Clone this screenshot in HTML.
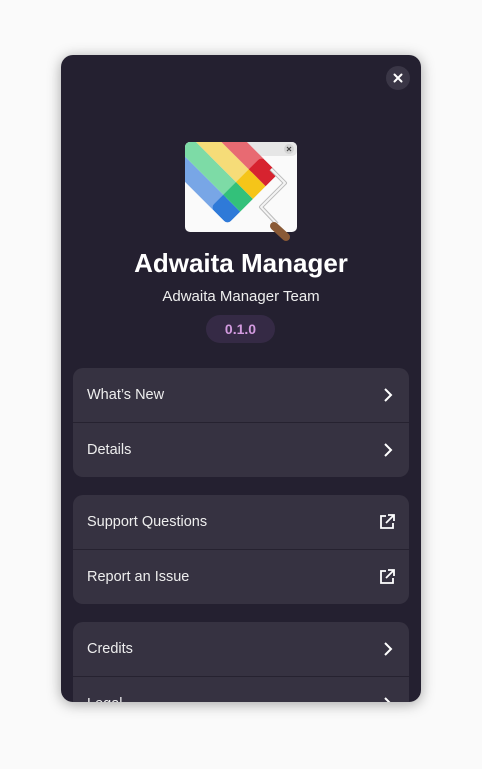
<!DOCTYPE html>
<html><head><style>
body{margin:0;width:482px;height:769px;background:#fafafa;font-family:"Liberation Sans",sans-serif;position:relative;overflow:hidden}
.win{position:absolute;left:61px;top:55px;width:360px;height:647px;background:#242030;border-radius:12px;overflow:hidden;box-shadow:0 2px 14px rgba(0,0,0,.35)}
.close{position:absolute;left:325px;top:11px;width:24px;height:24px;border-radius:12px;background:#3a3646}
.title{position:absolute;left:0;width:360px;top:193px;text-align:center;color:#fff;font-weight:bold;font-size:26px}
.team{position:absolute;left:0;width:360px;top:233px;text-align:center;color:#eee;font-size:15px}
.ver{position:absolute;left:145px;top:260px;width:69px;height:28px;border-radius:14px;background:#352a45;color:#d39be0;font-weight:bold;font-size:14px;text-align:center;line-height:28px}
.card{position:absolute;left:12px;width:336px;background:#363241;border-radius:10px;overflow:hidden}
.row{height:54px;line-height:54px;padding-left:14px;color:#eee;font-size:14.5px;position:relative;border-top:1px solid #262230}
.row:first-child{border-top:none}
.row svg{position:absolute;right:16px;top:19px}
</style></head><body>
<div class="win">
<div class="close"><svg width="24" height="24"><path d="M8.5 8.5L15.5 15.5M15.5 8.5L8.5 15.5" stroke="#fff" stroke-width="2" stroke-linecap="round"/></svg></div>
<svg style="position:absolute;left:122px;top:85px" width="120" height="105" viewBox="0 0 120 105">
<rect x="2" y="2" width="112" height="90" rx="5" fill="#fafafa"/>
<rect x="2" y="2" width="112" height="14" rx="5" fill="#e6e6e6"/>
<circle cx="106" cy="9" r="5" fill="#d4d4d4"/><path d="M104 7l4 4M108 7l-4 4" stroke="#444" stroke-width="1.2"/>
<clipPath id="c"><rect x="2" y="2" width="112" height="90" rx="5"/></clipPath>
<g clip-path="url(#c)">
<g transform="translate(53,42) rotate(-45)">
<rect x="-36" y="-100" width="18" height="104" fill="#78a6e6"/>
<rect x="-18" y="-100" width="18" height="104" fill="#7ddba6"/>
<rect x="0" y="-100" width="18" height="104" fill="#f6dc78"/>
<rect x="18" y="-100" width="18" height="104" fill="#e86a72"/>
</g>
</g>
<g transform="translate(53,42) rotate(-45)">
<clipPath id="r"><rect x="-36" y="0" width="72" height="24" rx="5"/></clipPath>
<g clip-path="url(#r)">
<rect x="-36" y="0" width="18" height="24" fill="#2f7ad8"/>
<rect x="-18" y="0" width="18" height="24" fill="#33c17a"/>
<rect x="0" y="0" width="18" height="24" fill="#f5c519"/>
<rect x="18" y="0" width="18" height="24" fill="#d7232f"/>
</g>
</g>
<path d="M88 29l14 14-24 24 16 17" fill="none" stroke="#bbb" stroke-width="4" stroke-linejoin="round"/>
<path d="M88 29l14 14-24 24 16 17" fill="none" stroke="#f4f4f4" stroke-width="2" stroke-linejoin="round"/>
<path d="M91 86l12 11" stroke="#8a5a36" stroke-width="8" stroke-linecap="round"/>
</svg>
<div class="title">Adwaita Manager</div>
<div class="team">Adwaita Manager Team</div>
<div class="ver">0.1.0</div>
<div class="card" style="top:313px"><div class="row">What’s New<svg width="10" height="16"><path d="M2 2l6 6-6 6" fill="none" stroke="#fff" stroke-width="2"/></svg></div><div class="row">Details<svg width="10" height="16"><path d="M2 2l6 6-6 6" fill="none" stroke="#fff" stroke-width="2"/></svg></div></div>
<div class="card" style="top:440px"><div class="row">Support Questions<svg width="16" height="16" style="right:14px"><path d="M7 2H2v12h12V9M9 1h6v6M15 1L7 9" fill="none" stroke="#fff" stroke-width="1.8"/></svg></div><div class="row">Report an Issue<svg width="16" height="16" style="right:14px"><path d="M7 2H2v12h12V9M9 1h6v6M15 1L7 9" fill="none" stroke="#fff" stroke-width="1.8"/></svg></div></div>
<div class="card" style="top:567px"><div class="row">Credits<svg width="10" height="16"><path d="M2 2l6 6-6 6" fill="none" stroke="#fff" stroke-width="2"/></svg></div><div class="row">Legal<svg width="10" height="16"><path d="M2 2l6 6-6 6" fill="none" stroke="#fff" stroke-width="2"/></svg></div></div>
</div>
</body></html>
